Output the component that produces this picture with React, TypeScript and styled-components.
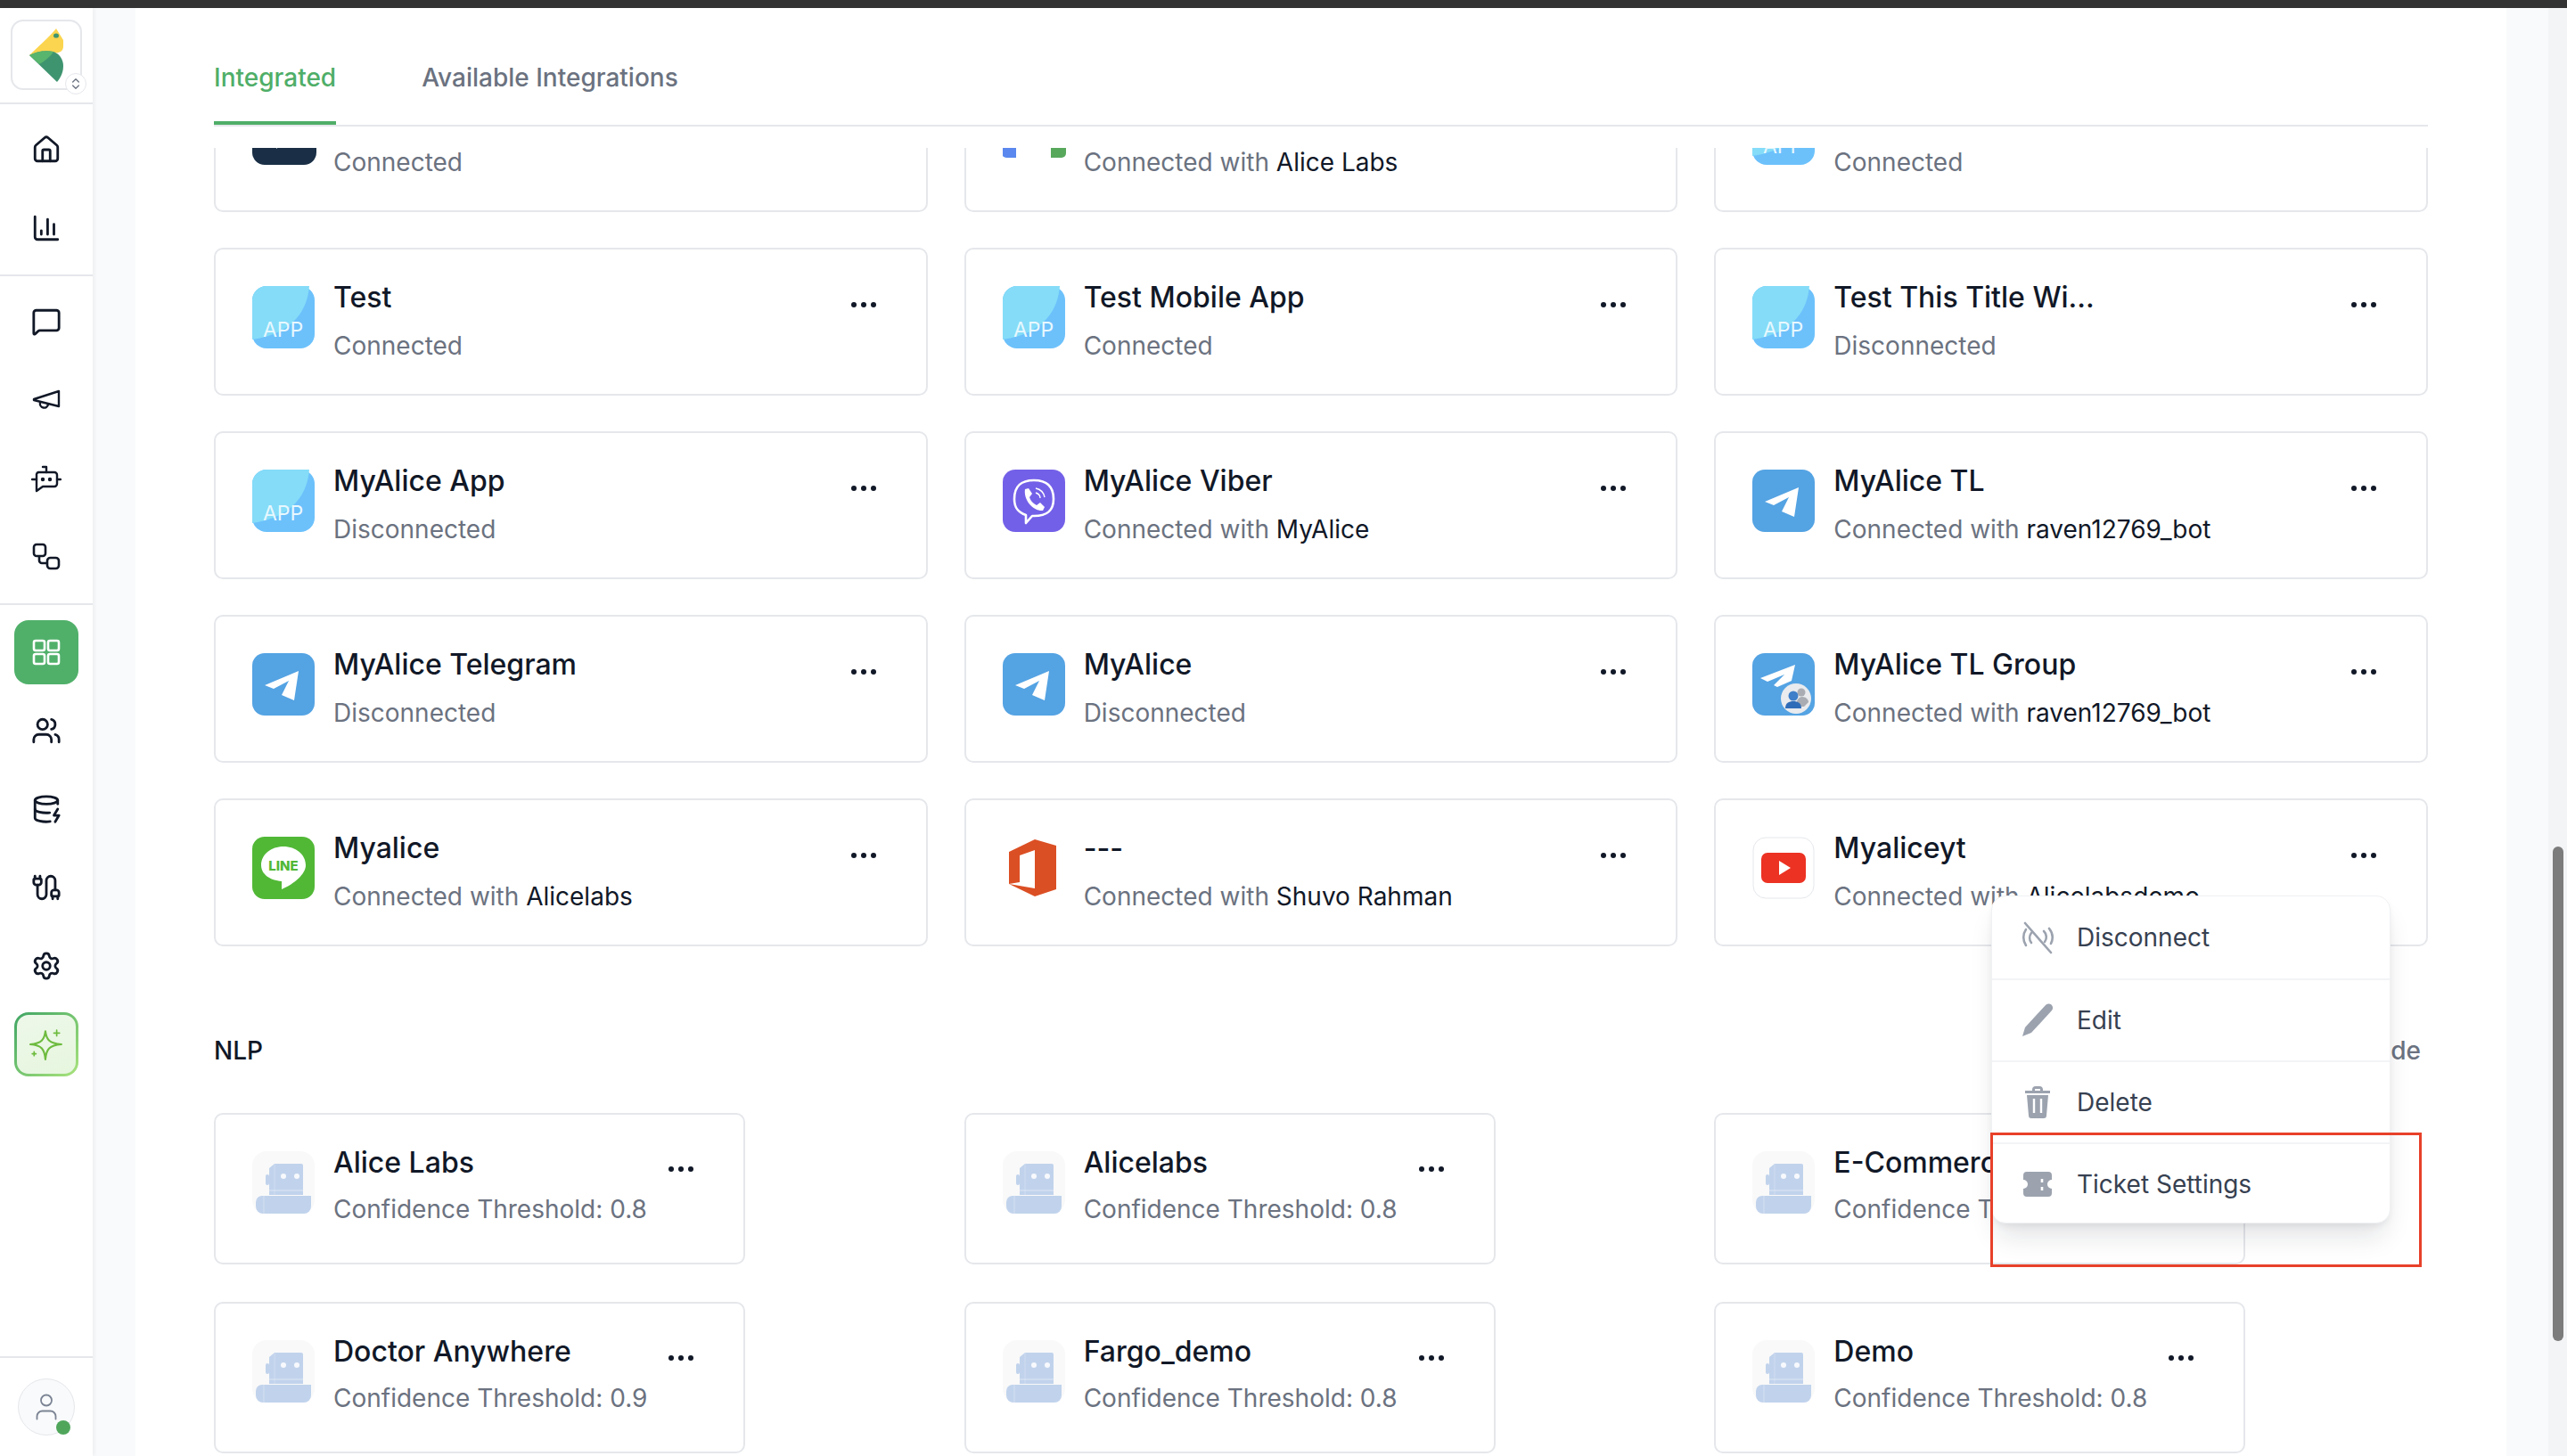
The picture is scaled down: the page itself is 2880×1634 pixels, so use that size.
import React from 'react';
import styled, { createGlobalStyle } from 'styled-components';
import { House, ChartColumn, MessageSquare, Users, DatabaseZap, Cable, Settings, User, ChevronsUpDown } from 'lucide-react';

const GlobalStyle = createGlobalStyle`
  html, body {
    margin: 0;
    padding: 0;
    background: #fff;
    overflow: hidden;
    font-family: Inter, "Liberation Sans", sans-serif;
  }
  * { box-sizing: border-box; }
`;

const Page = styled.div`
  width: 2880px;
  height: 1634px;
  display: flex;
  flex-direction: column;
  overflow: hidden;
`;

const TopBar = styled.div`
  height: 9px;
  flex: none;
  background: #333333;
`;

const Body = styled.div`
  flex: 1;
  min-height: 0;
  display: flex;
`;

const Sidebar = styled.nav`
  width: 104px;
  flex: none;
  display: flex;
  flex-direction: column;
  background: #fff;
  box-shadow: 2px 0 4px rgba(17, 24, 39, 0.05);
  z-index: 1;
`;

const LogoSection = styled.div`
  height: 108px;
  flex: none;
  padding: 13px 12px 0;
  border-bottom: 2px solid #e5e7eb;
`;

const LogoBox = styled.div`
  position: relative;
  width: 80px;
  height: 79px;
  display: flex;
  align-items: center;
  justify-content: center;
  border: 2px solid #e5e7eb;
  border-radius: 14px;
`;

const LogoBadge = styled.span`
  position: absolute;
  right: -7px;
  bottom: -7px;
  width: 24px;
  height: 24px;
  display: flex;
  align-items: center;
  justify-content: center;
  border-radius: 50%;
  background: #fff;
  border: 1px solid #e5e7eb;
  color: #6b7280;
`;

const NavGroup = styled.div<{ $grow?: boolean }>`
  flex: ${({ $grow }) => ($grow ? 1 : 'none')};
  display: flex;
  flex-direction: column;
  align-items: center;
  gap: 16px;
  padding: ${({ $grow }) => ($grow ? 17 : 15)}px 0 16px;
  border-bottom: 2px solid #e5e7eb;
`;

const NavItem = styled.div<{ $variant?: 'active' | 'spark' }>`
  width: 72px;
  height: 72px;
  flex: none;
  display: flex;
  align-items: center;
  justify-content: center;
  border-radius: 16px;
  color: ${({ $variant }) => ($variant === 'active' ? '#fff' : '#111827')};
  background: ${({ $variant }) => ($variant === 'active' ? '#50b06a' : 'transparent')};
  ${({ $variant }) =>
    $variant === 'spark' &&
    `
    border: 3px solid transparent;
    background: linear-gradient(160deg, #eef8ea, #e6f6de) padding-box,
      linear-gradient(135deg, #3fa564, #a9e37c) border-box;
  `}
`;

const SideFooter = styled.div`
  height: 110px;
  flex: none;
  display: flex;
  justify-content: center;
  padding-top: 23px;
`;

const Avatar = styled.div`
  position: relative;
  width: 64px;
  height: 64px;
  display: flex;
  align-items: center;
  justify-content: center;
  border-radius: 50%;
  background: #f9fafb;
  border: 1px solid #e5e7eb;
  color: #7b8494;
`;

const OnlineDot = styled.span`
  position: absolute;
  right: 4px;
  bottom: 0;
  width: 16px;
  height: 16px;
  border-radius: 50%;
  background: #4fa65b;
`;

const Gutter = styled.div`
  width: 48px;
  flex: none;
  background: #f9fafb;
`;

const Main = styled.main`
  width: 2660px;
  flex: none;
  display: flex;
  flex-direction: column;
  padding: 0 88px;
  background: #fff;
`;

const Tabs = styled.div`
  flex: none;
  display: flex;
  gap: 96px;
  padding-top: 58px;
  border-bottom: 2px solid #e5e7eb;
`;

const Tab = styled.div<{ $active?: boolean }>`
  font-size: 28px;
  line-height: 40px;
  font-weight: 500;
  padding-bottom: 29px;
  color: ${({ $active }) => ($active ? '#4fae68' : '#6b7280')};
  border-bottom: 4px solid ${({ $active }) => ($active ? '#4fae68' : 'transparent')};
`;

const Scroller = styled.div`
  flex: 1;
  min-height: 0;
  margin-top: 24px;
  overflow: hidden;
`;

const ScrollInner = styled.div`
  margin-top: -94px;
`;

const CardGrid = styled.div<{ $rowGap: number }>`
  display: grid;
  grid-template-columns: repeat(3, 1fr);
  column-gap: 41px;
  row-gap: ${({ $rowGap }) => $rowGap}px;
`;

const Card = styled.div<{ $nlp?: boolean }>`
  position: relative;
  height: ${({ $nlp }) => ($nlp ? 170 : 166)}px;
  width: ${({ $nlp }) => ($nlp ? '596px' : 'auto')};
  display: flex;
  align-items: flex-start;
  gap: 21px;
  padding: 32px 42px 32px 41px;
  border: 2px solid #e5e7eb;
  border-radius: 10px;
  background: #fff;
`;

const CardIcon = styled.div`
  width: 70px;
  height: 70px;
  flex: none;
  margin-top: 9px;
`;

const CardText = styled.div`
  flex: 1;
  min-width: 0;
  padding-top: 2px;
`;

const CardTitle = styled.div`
  font-size: 32px;
  line-height: 40px;
  font-weight: 500;
  color: #111827;
`;

const CardSub = styled.div<{ $nlp?: boolean }>`
  margin-top: ${({ $nlp }) => ($nlp ? 12 : 14)}px;
  font-size: 28px;
  line-height: 40px;
  color: #6b7280;
  white-space: nowrap;
`;

const SubName = styled.span`
  color: #111827;
`;

const DotsButton = styled.div<{ $nlp?: boolean }>`
  flex: none;
  display: flex;
  margin: ${({ $nlp }) => ($nlp ? 25 : 26)}px 13px 0 0;
`;

const SectionHead = styled.div`
  display: flex;
  justify-content: space-between;
  margin: 97px 8px 50px 0;
  font-size: 28px;
  line-height: 40px;
  font-weight: 500;
  color: #111827;
`;

const SectionLink = styled.span`
  color: #6b7280;
`;

const Menu = styled.div`
  position: absolute;
  top: 107px;
  right: 40px;
  width: 448px;
  height: 368px;
  z-index: 5;
  background: #fff;
  border: 1px solid #f0f1f3;
  border-radius: 16px;
  box-shadow: 0 20px 30px -6px rgba(17, 24, 39, 0.12), 0 4px 8px -2px rgba(17, 24, 39, 0.08);
`;

const MenuRow = styled.div`
  height: 92px;
  display: flex;
  align-items: center;
  gap: 24px;
  padding-left: 31px;
  font-size: 28px;
  color: #374151;
  border-top: 2px solid #f3f4f6;

  &:first-child {
    border-top: 0;
  }
`;

const HighlightBox = styled.div`
  position: absolute;
  left: -2px;
  top: 265px;
  width: 484px;
  height: 151px;
  border: 3px solid #e8412a;
  pointer-events: none;
`;

const PageEdge = styled.div`
  width: 47px;
  flex: none;
  background: #f9fafb;
`;

const ScrollTrack = styled.div`
  width: 21px;
  flex: none;
  padding: 941px 4px 0 5px;
  background: #f3f4f6;
`;

const ScrollThumb = styled.div`
  height: 555px;
  border-radius: 6px;
  background: #7c7c7c;
`;

const Logo = () => (
  <svg width="38" height="60" viewBox="0 0 38 60">
    <path d="M30 0 L38 13 V20 C38 26 33 28 27 27 L0 30 C10 20 22 10 30 0 Z" fill="#fbd54f" />
    <path d="M0 30 L31 60 C36 54 38 48 38 42 C38 34 33 28 27 26 C17 24 8 26 0 30 Z" fill="#3f9470" />
    <path d="M0 30 C8 26 17 24 27 26 C24 31 17 37 11 40 Z" fill="#58b56d" />
    <ellipse cx="30" cy="8" rx="3" ry="2.6" fill="#3f9470" />
  </svg>
);

const MegaphoneIcon = () => (
  <svg width="34" height="34" viewBox="0 0 34 34" fill="none" stroke="currentColor" strokeWidth="2.4" strokeLinejoin="round" strokeLinecap="round">
    <path d="M31 7 L3 16 V17 L31 24 Z" />
    <path d="M10 20 a4.5 4.5 0 0 0 9 2" />
  </svg>
);

const BotIcon = () => (
  <svg width="34" height="34" viewBox="0 0 34 34" fill="none" stroke="currentColor" strokeWidth="2.4" strokeLinejoin="round" strokeLinecap="round">
    <path d="M8 10h18a3 3 0 0 1 3 3v10a3 3 0 0 1-3 3H13l-7 5V12a3 3 0 0 1 2-2Z" />
    <path d="M17 10V4h-4" />
    <path d="M1 18h5M29 18h4" />
    <circle cx="13" cy="18" r="1" fill="currentColor" />
    <circle cx="21" cy="18" r="1" fill="currentColor" />
  </svg>
);

const FlowIcon = () => (
  <svg width="32" height="32" viewBox="0 0 32 32" fill="none" stroke="currentColor" strokeWidth="2.6" strokeLinejoin="round">
    <rect x="2" y="2" width="13" height="13" rx="3" />
    <rect x="17" y="17" width="13" height="12" rx="3.5" />
    <path d="M8 15v5a3 3 0 0 0 3 3h6" />
  </svg>
);

const GridIcon = () => (
  <svg width="32" height="32" viewBox="0 0 32 32" fill="none" stroke="currentColor" strokeWidth="2.6">
    <rect x="2" y="3" width="12" height="11" rx="2" />
    <rect x="18" y="3" width="12" height="11" rx="2" />
    <rect x="2" y="18" width="12" height="11" rx="2" />
    <rect x="18" y="18" width="12" height="11" rx="2" />
  </svg>
);

const SparkIcon = () => (
  <svg width="38" height="38" viewBox="0 0 36 36" fill="none" stroke="#6dbb3e" strokeWidth="2" strokeLinejoin="round" strokeLinecap="round">
    <path d="M17 4 C18 13 21 17 34 18 C21 19 18 23 17 34 C16 23 13 19 1 18 C13 17 16 13 17 4 Z" />
    <path d="M29 3v6M26 6h6M5 26v4M3 28h4" strokeWidth="1.6" />
  </svg>
);

const DotsIcon = () => (
  <svg width="30" height="8" viewBox="0 0 30 8" fill="#111827">
    <circle cx="4" cy="4" r="3" />
    <circle cx="15" cy="4" r="3" />
    <circle cx="26" cy="4" r="3" />
  </svg>
);

const AppIcon = () => (
  <svg width="70" height="70" viewBox="0 0 70 70">
    <rect width="70" height="70" rx="16" fill="#6cc1fb" />
    <path d="M16 0 H64 C62 25 48 53 0 60 V16 A16 16 0 0 1 16 0 Z" fill="#84dcf8" />
    <text x="34.5" y="57" textAnchor="middle" fontFamily="Inter, sans-serif" fontSize="23" fill="#e8f8fe">APP</text>
  </svg>
);

const NavyIcon = () => (
  <svg width="72" height="70" viewBox="0 0 72 70">
    <rect width="72" height="70" rx="14" fill="#1a2f45" />
    <path d="M22 18 H50 V44 H36 L27 52 V44 H22 Z" fill="#fff" />
  </svg>
);

const SquaresIcon = () => (
  <svg width="72" height="70" viewBox="0 0 72 70">
    <path d="M-1 0 H15 V62 H4 A5 5 0 0 1 -1 57 Z" fill="#5a88ee" />
    <path d="M54 0 H71 V57 A5 5 0 0 1 66 62 H54 Z" fill="#58a85c" />
  </svg>
);

const TelegramIcon = () => (
  <svg width="70" height="70" viewBox="0 0 70 70">
    <rect width="70" height="70" rx="14" fill="#54a3e3" />
    <path d="M14 36 L52 20 L47 53 L33 47 L41 31 L24 40 Z" fill="#fff" />
  </svg>
);

const TelegramGroupIcon = () => (
  <svg width="70" height="70" viewBox="0 0 70 70">
    <rect width="70" height="70" rx="14" fill="#54a3e3" />
    <path d="M9 28 L48 13 L44 31 L28 38 L24 36 L36 24 L17 32 Z" fill="#fff" />
    <circle cx="49" cy="51" r="17" fill="#e9ebee" />
    <circle cx="55" cy="44" r="4.5" fill="#a9acb2" />
    <path d="M49 60 C49 52 53 49 56 49 C60 49 63 52 63 55 L58 60 Z" fill="#a9acb2" />
    <circle cx="46" cy="48" r="5.5" fill="#3f7fc9" />
    <path d="M37 62 C37 56 41 54 46 54 C51 54 55 56 55 62 Z" fill="#2f6cb8" />
  </svg>
);

const ViberIcon = () => (
  <svg width="70" height="70" viewBox="0 0 70 70">
    <rect width="70" height="70" rx="14" fill="#7360e8" />
    <path d="M35 12 C49 12 57 18 57 33 C57 47 49 52 35 52 H33 L26 60 V51 C17 48 13 43 13 33 C13 18 21 12 35 12 Z" fill="none" stroke="#fff" strokeWidth="2.6" strokeLinejoin="round" />
    <path d="M25 22 L29 21 L33 27 L30 31 C31 35 34 38 38 40 L42 37 L47 42 L45 46 C35 47 23 35 25 22 Z" fill="#fff" />
    <path d="M37 21 C42 22 46 26 47 31 M37 26 C40 27 42 29 42 32" fill="none" stroke="#fff" strokeWidth="1.4" />
  </svg>
);

const LineIcon = () => (
  <svg width="70" height="70" viewBox="0 0 70 70">
    <rect width="70" height="70" rx="14" fill="#51b836" />
    <path d="M35 11 C49 11 60 20 60 32 C60 42 47 53 33 59 V50 C20 49 10 42 10 32 C10 20 21 11 35 11 Z" fill="#fff" />
    <text x="35" y="38" textAnchor="middle" fontFamily="Inter, sans-serif" fontWeight="800" fontSize="15" fill="#51b836">LINE</text>
  </svg>
);

const OfficeIcon = () => (
  <svg width="70" height="70" viewBox="0 0 70 70">
    <path fillRule="evenodd" d="M7 17 L36 3 L60 10 V59 L36 67 L7 53 Z M19 21 V51 L7 53 L36 58 V15 Z" fill="#db4f24" />
  </svg>
);

const YoutubeIcon = () => (
  <svg width="70" height="70" viewBox="0 0 70 70">
    <rect x="1" y="1" width="68" height="68" rx="14" fill="#fff" stroke="#e5e7eb" />
    <rect x="10" y="18" width="50" height="34" rx="7" fill="#ec3223" />
    <path d="M30 27 L43 35 L30 43 Z" fill="#fff" />
  </svg>
);

const RobotIcon = () => (
  <svg width="70" height="70" viewBox="0 0 70 70">
    <rect width="70" height="70" rx="16" fill="#f9f9f9" />
    <path d="M25 14 H55 A2 2 0 0 1 57 16 V49 H19 V19 Z" fill="#c1d3ec" />
    <path d="M25 14 V49" stroke="#d3dff2" strokeWidth="0.8" />
    <path d="M19 44 H57" stroke="#e6edf8" strokeWidth="0.8" />
    <rect x="15" y="26" width="4" height="12" rx="2" fill="#c1d3ec" />
    <circle cx="35" cy="28" r="3" fill="#f7f9fd" />
    <circle cx="50" cy="28" r="3" fill="#f7f9fd" />
    <path d="M11 50 H66 V62 A8 8 0 0 1 58 70 H12 A8 8 0 0 1 4 62 V57 A7 7 0 0 1 11 50 Z" fill="#c1d3ec" />
    <path d="M13 50 V70" stroke="#dbe5f4" strokeWidth="0.8" />
  </svg>
);

const DisconnectIcon = () => (
  <svg width="40" height="40" viewBox="0 0 40 40" fill="none" stroke="#9ca3af" strokeWidth="2.6" strokeLinecap="round">
    <path d="M6 4 L35 37" />
    <path d="M7 11 A16 16 0 0 0 7 29" />
    <path d="M13 15 A9 9 0 0 0 13 26" />
    <path d="M27 13 A9 9 0 0 1 28 25" />
    <path d="M33 10 A16 16 0 0 1 35 27" />
  </svg>
);

const PencilIcon = () => (
  <svg width="40" height="40" viewBox="0 0 40 40">
    <path d="M3 38 L6 28 L29 3 A4 4 0 0 1 36 9 L13 34 Z" fill="#9ca3af" />
  </svg>
);

const TrashIcon = () => (
  <svg width="40" height="40" viewBox="0 0 40 40">
    <path d="M14 6 A4 4 0 0 1 18 2 H22 A4 4 0 0 1 26 6 V7 H34 V10 H6 V7 H14 Z M17 7 H23 V5 H17 Z" fill="#9ca3af" />
    <path d="M8 12 H32 L30 35 A3 3 0 0 1 27 38 H13 A3 3 0 0 1 10 35 Z" fill="#9ca3af" />
    <path d="M16 16 V32 M24 16 V32" stroke="#fff" strokeWidth="2.4" />
  </svg>
);

const TicketIcon = () => (
  <svg width="40" height="40" viewBox="0 0 40 40">
    <path d="M8 6 H32 A4 4 0 0 1 36 10 V15 A5 5 0 0 0 36 25 V30 A4 4 0 0 1 32 34 H8 A4 4 0 0 1 4 30 V25 A5 5 0 0 0 4 15 V10 A4 4 0 0 1 8 6 Z" fill="#9ca3af" />
    <path d="M25 14 V18 M25 23 V27" stroke="#fff" strokeWidth="2.6" />
  </svg>
);

type IntegrationRow = {
  title: string;
  icon: React.ReactNode;
  status: string;
  by?: string;
};

const integrations: IntegrationRow[] = [
  { title: 'MyAlice Bot', icon: <NavyIcon />, status: 'Connected' },
  { title: 'Alice Labs', icon: <SquaresIcon />, status: 'Connected with', by: 'Alice Labs' },
  { title: 'MyAlice Web', icon: <AppIcon />, status: 'Connected' },
  { title: 'Test', icon: <AppIcon />, status: 'Connected' },
  { title: 'Test Mobile App', icon: <AppIcon />, status: 'Connected' },
  { title: 'Test This Title Wi...', icon: <AppIcon />, status: 'Disconnected' },
  { title: 'MyAlice App', icon: <AppIcon />, status: 'Disconnected' },
  { title: 'MyAlice Viber', icon: <ViberIcon />, status: 'Connected with', by: 'MyAlice' },
  { title: 'MyAlice TL', icon: <TelegramIcon />, status: 'Connected with', by: 'raven12769_bot' },
  { title: 'MyAlice Telegram', icon: <TelegramIcon />, status: 'Disconnected' },
  { title: 'MyAlice', icon: <TelegramIcon />, status: 'Disconnected' },
  { title: 'MyAlice TL Group', icon: <TelegramGroupIcon />, status: 'Connected with', by: 'raven12769_bot' },
  { title: 'Myalice', icon: <LineIcon />, status: 'Connected with', by: 'Alicelabs' },
  { title: '---', icon: <OfficeIcon />, status: 'Connected with', by: 'Shuvo Rahman' },
  { title: 'Myaliceyt', icon: <YoutubeIcon />, status: 'Connected with', by: 'Alicelabsdemo' },
];

const nlpAgents = [
  { title: 'Alice Labs', threshold: '0.8' },
  { title: 'Alicelabs', threshold: '0.8' },
  { title: 'E-Commerce', threshold: '0.8' },
  { title: 'Doctor Anywhere', threshold: '0.9' },
  { title: 'Fargo_demo', threshold: '0.8' },
  { title: 'Demo', threshold: '0.8' },
];

const menuItems = [
  { label: 'Disconnect', icon: <DisconnectIcon /> },
  { label: 'Edit', icon: <PencilIcon /> },
  { label: 'Delete', icon: <TrashIcon /> },
  { label: 'Ticket Settings', icon: <TicketIcon /> },
];

const App = () => (
  <Page>
    <GlobalStyle />
    <TopBar />
    <Body>
      <Sidebar>
        <LogoSection>
          <LogoBox>
            <Logo />
            <LogoBadge>
              <ChevronsUpDown size={16} strokeWidth={2} />
            </LogoBadge>
          </LogoBox>
        </LogoSection>
        <NavGroup>
          <NavItem><House size={34} strokeWidth={2} /></NavItem>
          <NavItem><ChartColumn size={34} strokeWidth={2} /></NavItem>
        </NavGroup>
        <NavGroup>
          <NavItem><MessageSquare size={34} strokeWidth={2} /></NavItem>
          <NavItem><MegaphoneIcon /></NavItem>
          <NavItem><BotIcon /></NavItem>
          <NavItem><FlowIcon /></NavItem>
        </NavGroup>
        <NavGroup $grow>
          <NavItem $variant="active"><GridIcon /></NavItem>
          <NavItem><Users size={34} strokeWidth={2} /></NavItem>
          <NavItem><DatabaseZap size={34} strokeWidth={2} /></NavItem>
          <NavItem><Cable size={34} strokeWidth={2} /></NavItem>
          <NavItem><Settings size={34} strokeWidth={2} /></NavItem>
          <NavItem $variant="spark"><SparkIcon /></NavItem>
        </NavGroup>
        <SideFooter>
          <Avatar>
            <User size={36} strokeWidth={1.2} />
            <OnlineDot />
          </Avatar>
        </SideFooter>
      </Sidebar>
      <Gutter />
      <Main>
        <Tabs>
          <Tab $active>Integrated</Tab>
          <Tab>Available Integrations</Tab>
        </Tabs>
        <Scroller>
          <ScrollInner>
            <CardGrid $rowGap={40}>
              {integrations.map((row) => (
                <Card key={row.title}>
                  <CardIcon>{row.icon}</CardIcon>
                  <CardText>
                    <CardTitle>{row.title}</CardTitle>
                    <CardSub>
                      {row.status}
                      {row.by && <SubName> {row.by}</SubName>}
                    </CardSub>
                  </CardText>
                  <DotsButton><DotsIcon /></DotsButton>
                  {row.title === 'Myaliceyt' && (
                    <Menu>
                      {menuItems.map((item) => (
                        <MenuRow key={item.label}>
                          {item.icon}
                          {item.label}
                        </MenuRow>
                      ))}
                      <HighlightBox />
                    </Menu>
                  )}
                </Card>
              ))}
            </CardGrid>
            <SectionHead>
              NLP
              <SectionLink>Guide</SectionLink>
            </SectionHead>
            <CardGrid $rowGap={42}>
              {nlpAgents.map((agent) => (
                <Card $nlp key={agent.title}>
                  <CardIcon><RobotIcon /></CardIcon>
                  <CardText>
                    <CardTitle>{agent.title}</CardTitle>
                    <CardSub $nlp>Confidence Threshold: {agent.threshold}</CardSub>
                  </CardText>
                  <DotsButton $nlp><DotsIcon /></DotsButton>
                </Card>
              ))}
            </CardGrid>
          </ScrollInner>
        </Scroller>
      </Main>
      <PageEdge />
      <ScrollTrack>
        <ScrollThumb />
      </ScrollTrack>
    </Body>
  </Page>
);

export default App;
